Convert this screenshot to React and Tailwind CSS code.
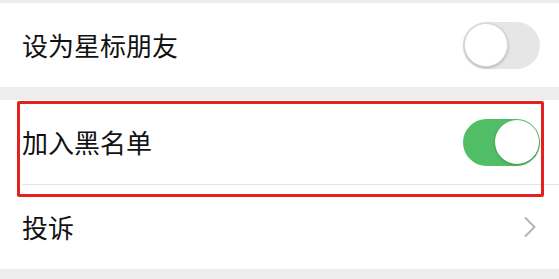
import React from 'react'

function Toggle({ on }) {
  return (
    <div
      className={`relative h-[47px] w-[77px] rounded-full ${on ? 'bg-[#52bd67]' : 'bg-[#e6e6e6]'}`}
    >
      <div
        className={`absolute top-[1.5px] h-[44px] w-[44px] rounded-full bg-white shadow-[0_1px_3px_rgba(0,0,0,0.25)] ${on ? 'left-[31.5px]' : 'left-[1px] border border-[#d9d9d9]'}`}
      />
    </div>
  )
}

function Row({ label, children, last }) {
  return (
    <div className="flex h-[84px] items-center pl-[22px] pr-[19px]">
      <span className="text-[26px] leading-none text-[#111]">{label}</span>
      <div className="ml-auto flex items-center">{children}</div>
    </div>
  )
}

export default function App() {
  return (
    <div
      className="relative h-[279px] w-[559px] overflow-hidden bg-[#ededed] pt-[3px]"
      style={{ fontFamily: '"Noto Sans CJK SC", "Noto Sans", sans-serif' }}
    >
      <div className="bg-white">
        <Row label="设为星标朋友">
          <Toggle on={false} />
        </Row>
      </div>

      <div className="mt-[13px] bg-white">
        <Row label="加入黑名单">
          <Toggle on />
        </Row>
        <div className="ml-[22px] h-px bg-[#e5e5e5]" />
        <Row label="投诉">
          <svg width="14" height="22" viewBox="0 0 14 22" fill="none" className="mr-[3px]">
            <path d="M2 1.5 L11.5 11 L2 20.5" stroke="#b5b5b5" strokeWidth="2" />
          </svg>
        </Row>
      </div>

      <div className="absolute left-[17px] top-[101px] h-[96px] w-[527px] rounded-[2px] border-[3px] border-[#e3221f]" />
    </div>
  )
}
